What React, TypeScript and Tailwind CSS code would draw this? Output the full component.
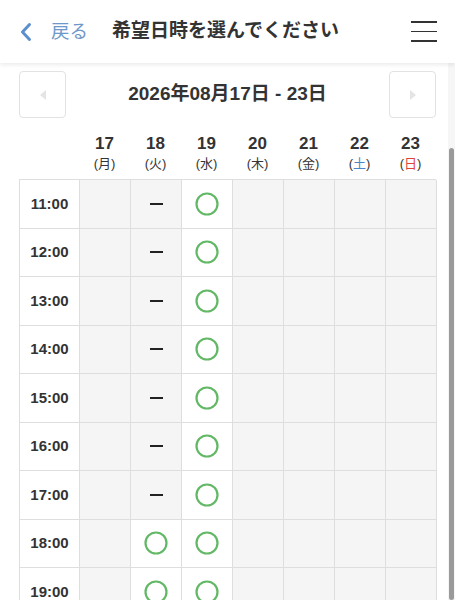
import React from "react";

type Cell = "empty" | "none" | "ok";

const days = [
  { d: "17", w: "月", color: "text-[#333]" },
  { d: "18", w: "火", color: "text-[#333]" },
  { d: "19", w: "水", color: "text-[#333]" },
  { d: "20", w: "木", color: "text-[#333]" },
  { d: "21", w: "金", color: "text-[#333]" },
  { d: "22", w: "土", color: "text-[#4a86c5]" },
  { d: "23", w: "日", color: "text-[#e0413a]" },
];

const times = ["11:00", "12:00", "13:00", "14:00", "15:00", "16:00", "17:00", "18:00", "19:00", "20:00"];

function cellFor(time: string, col: number): Cell {
  if (col === 2) return "ok";
  if (col === 1) return time === "18:00" || time === "19:00" || time === "20:00" ? "ok" : "none";
  return "empty";
}

function Circle() {
  return (
    <svg width="24" height="24" viewBox="0 0 24 24">
      <circle cx="12" cy="12" r="10.5" fill="none" stroke="#62b865" strokeWidth="2.2" />
    </svg>
  );
}

export default function App() {
  return (
    <div
      className="relative h-[600px] w-[455px] overflow-hidden bg-white text-[#333]"
      style={{ fontFamily: '"Liberation Sans", "Noto Sans CJK JP", sans-serif' }}
    >
      {/* header */}
      <header className="relative z-10 flex h-[63px] items-center bg-white pl-[19px] pr-[18px] shadow-[0_2px_4px_rgba(0,0,0,0.08)]">
        <svg width="14" height="20" viewBox="0 0 14 20" className="mr-[18px]">
          <path d="M10.5 2.5 L3.5 10 L10.5 17.5" fill="none" stroke="#5b8fd0" strokeWidth="3" strokeLinecap="round" strokeLinejoin="round" />
        </svg>
        <span className="text-[18.5px] text-[#6f98ca]">戻る</span>
        <h1 className="ml-[24px] text-[19px] font-bold text-[#333]">希望日時を選んでください</h1>
        <div className="ml-auto flex w-[26px] flex-col gap-[7.5px]">
          <span className="h-[1.8px] w-full bg-[#333]" />
          <span className="h-[1.8px] w-full bg-[#333]" />
          <span className="h-[1.8px] w-full bg-[#333]" />
        </div>
      </header>

      <main className="px-[19px]">
        {/* week nav */}
        <div className="mt-[8px] flex items-center justify-between">
          <button className="flex h-[47px] w-[47px] items-center justify-center rounded-[4px] border border-[#e2e2e2] bg-white">
            <svg width="6" height="10" viewBox="0 0 6 10">
              <path d="M6 0 L0 5 L6 10 Z" fill="#e4e4e4" />
            </svg>
          </button>
          <div className="text-[19px] font-bold text-[#333]">2026年08月17日 - 23日</div>
          <button className="flex h-[47px] w-[47px] items-center justify-center rounded-[4px] border border-[#e2e2e2] bg-white">
            <svg width="6" height="10" viewBox="0 0 6 10">
              <path d="M0 0 L6 5 L0 10 Z" fill="#e4e4e4" />
            </svg>
          </button>
        </div>

        {/* day header */}
        <div className="mt-[16px] grid grid-cols-[60px_repeat(7,51px)]">
          <div />
          {days.map((day) => (
            <div key={day.d} className="flex h-[45px] flex-col items-center">
              <span className="text-[17px] font-bold leading-[20px] text-[#333]">{day.d}</span>
              <span className="mt-[1px] text-[13px] leading-[18px] text-[#333]">
                (<span className={day.color}>{day.w}</span>)
              </span>
            </div>
          ))}
        </div>

        {/* schedule grid */}
        <div className="grid grid-cols-[60px_repeat(7,51px)] border-l border-t border-[#dedede]">
          {times.map((t) => (
            <React.Fragment key={t}>
              <div className="flex h-[48.5px] items-center justify-center border-b border-r border-[#dedede] bg-white text-[15px] font-bold text-[#333]">
                {t}
              </div>
              {days.map((day, i) => {
                const c = cellFor(t, i);
                return (
                  <div
                    key={day.d}
                    className={`flex h-[48.5px] items-center justify-center border-b border-r border-[#dedede] ${
                      c === "ok" ? "bg-white" : "bg-[#f5f5f5]"
                    }`}
                  >
                    {c === "ok" && <Circle />}
                    {c === "none" && <span className="h-[2.2px] w-[13px] bg-[#222]" />}
                  </div>
                );
              })}
            </React.Fragment>
          ))}
        </div>
      </main>

      {/* overlay scrollbar */}
      <div className="absolute right-0 top-0 h-full w-[7px] bg-[#f0f0f0]/60">
        <div className="absolute left-[1px] right-[1px] top-[148px] bottom-0 rounded-full bg-[#9a9a9a]" />
      </div>
    </div>
  );
}
